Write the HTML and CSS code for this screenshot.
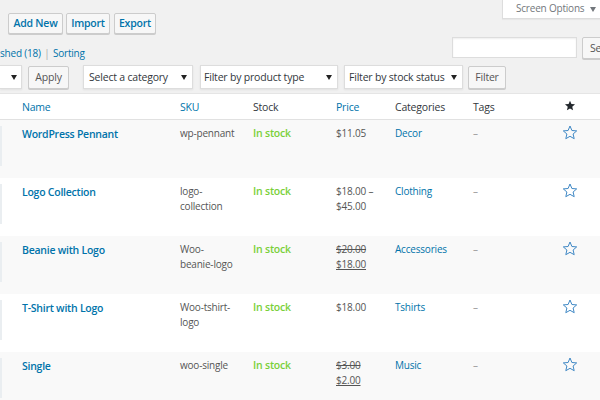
FILE: index.html
```html
<!DOCTYPE html>
<html>
<head>
<meta charset="utf-8">
<link rel="stylesheet" href="styles.css">
</head>
<body>
<div class="top">
  <div class="actions">
    <a class="btn add">Add New</a>
    <a class="btn imp">Import</a>
    <a class="btn exp">Export</a>
  </div>
  <div class="screen-tab">Screen Options <span class="tri"></span></div>
</div>
<div class="row2">
  <div class="subsubsub"><a>shed <span class="count">(18)</span></a> <span class="sep">|</span> <a>Sorting</a></div>
  <div class="search">
    <input class="search-input" type="text">
    <button class="btn gray">Search Products</button>
  </div>
</div>
<div class="tablenav">
  <div class="select bulk"><span class="tri"></span></div>
  <button class="btn gray apply">Apply</button>
  <div class="select cat">Select a category<span class="tri"></span></div>
  <div class="select type">Filter by product type<span class="tri"></span></div>
  <div class="select stock">Filter by stock status<span class="tri"></span></div>
  <button class="btn gray filter">Filter</button>
</div>
<table class="products">
  <colgroup>
    <col class="c-thumb"><col class="c-name"><col class="c-sku"><col class="c-stock"><col class="c-price"><col class="c-cat"><col class="c-tags"><col class="c-feat">
  </colgroup>
  <thead>
    <tr>
      <th></th>
      <th class="sort">Name</th>
      <th class="sort">SKU</th>
      <th>Stock</th>
      <th class="sort">Price</th>
      <th>Categories</th>
      <th>Tags</th>
      <th class="feat"><svg class="star-h" viewBox="0 0 16 16" width="12" height="12"><polygon points="8,1 9.9,5.4 14.7,5.8 11,9 12.1,13.7 8,11.2 3.9,13.7 5,9 1.3,5.8 6.1,5.4" fill="#23282d"/></svg></th>
    </tr>
  </thead>
  <tbody>
    <tr class="alt">
      <td><div class="thumb"></div></td>
      <td><a class="title">WordPress Pennant</a></td>
      <td class="sku">wp-pennant</td>
      <td class="instock">In stock</td>
      <td class="price">$11.05</td>
      <td class="cat"><a>Decor</a></td>
      <td class="tags">–</td>
      <td class="feat"><svg class="star" viewBox="0 0 16 16" width="16" height="16"><polygon points="8,1 9.9,5.5 14.7,5.9 11.1,9 12.2,13.7 8,11.3 3.8,13.7 4.9,9 1.3,5.9 6.1,5.5" fill="none" stroke="#3f88c5" stroke-width="1" stroke-linejoin="round"/></svg></td>
    </tr>
    <tr>
      <td><div class="thumb"></div></td>
      <td><a class="title">Logo Collection</a></td>
      <td class="sku">logo-collection</td>
      <td class="instock">In stock</td>
      <td class="price">$18.00&nbsp;–<br>$45.00</td>
      <td class="cat"><a>Clothing</a></td>
      <td class="tags">–</td>
      <td class="feat"><svg class="star" viewBox="0 0 16 16" width="16" height="16"><polygon points="8,1 9.9,5.5 14.7,5.9 11.1,9 12.2,13.7 8,11.3 3.8,13.7 4.9,9 1.3,5.9 6.1,5.5" fill="none" stroke="#3f88c5" stroke-width="1" stroke-linejoin="round"/></svg></td>
    </tr>
    <tr class="alt">
      <td><div class="thumb"></div></td>
      <td><a class="title">Beanie with Logo</a></td>
      <td class="sku">Woo-beanie-logo</td>
      <td class="instock">In stock</td>
      <td class="price"><del>$20.00</del><br><ins>$18.00</ins></td>
      <td class="cat"><a>Accessories</a></td>
      <td class="tags">–</td>
      <td class="feat"><svg class="star" viewBox="0 0 16 16" width="16" height="16"><polygon points="8,1 9.9,5.5 14.7,5.9 11.1,9 12.2,13.7 8,11.3 3.8,13.7 4.9,9 1.3,5.9 6.1,5.5" fill="none" stroke="#3f88c5" stroke-width="1" stroke-linejoin="round"/></svg></td>
    </tr>
    <tr>
      <td><div class="thumb"></div></td>
      <td><a class="title">T-Shirt with Logo</a></td>
      <td class="sku">Woo-tshirt-logo</td>
      <td class="instock">In stock</td>
      <td class="price">$18.00</td>
      <td class="cat"><a>Tshirts</a></td>
      <td class="tags">–</td>
      <td class="feat"><svg class="star" viewBox="0 0 16 16" width="16" height="16"><polygon points="8,1 9.9,5.5 14.7,5.9 11.1,9 12.2,13.7 8,11.3 3.8,13.7 4.9,9 1.3,5.9 6.1,5.5" fill="none" stroke="#3f88c5" stroke-width="1" stroke-linejoin="round"/></svg></td>
    </tr>
    <tr class="alt">
      <td><div class="thumb"></div></td>
      <td><a class="title">Single</a></td>
      <td class="sku">woo-single</td>
      <td class="instock">In stock</td>
      <td class="price"><del>$3.00</del><br><ins>$2.00</ins></td>
      <td class="cat"><a>Music</a></td>
      <td class="tags">–</td>
      <td class="feat"><svg class="star" viewBox="0 0 16 16" width="16" height="16"><polygon points="8,1 9.9,5.5 14.7,5.9 11.1,9 12.2,13.7 8,11.3 3.8,13.7 4.9,9 1.3,5.9 6.1,5.5" fill="none" stroke="#3f88c5" stroke-width="1" stroke-linejoin="round"/></svg></td>
    </tr>
  </tbody>
</table>
</body>
</html>
```
FILE: styles.css
```css
html, body { margin: 0; padding: 0; overflow: hidden; }
body {
  width: 600px;
  height: 400px;
  background: #f1f1f1;
  font-family: "Open Sans", "Noto Sans", sans-serif;
  font-size: 10.5px;
  letter-spacing: -0.2px;
  color: #444;
}
a { color: #0073aa; text-decoration: none; }

.top { display: flex; justify-content: space-between; align-items: flex-start; height: 37px; }
.actions { display: flex; gap: 3px; margin: 13px 0 0 8px; }
.btn {
  display: inline-block;
  box-sizing: border-box;
  height: 21px;
  padding: 0 5px;
  border: 1px solid #ccc;
  border-radius: 2px;
  background: #f7f7f7;
  box-shadow: 0 1px 0 #ccc;
  color: #0073aa;
  font-family: inherit;
  font-size: 10.5px;
  letter-spacing: -0.2px;
  font-weight: 600;
  line-height: 19px;
  white-space: nowrap;
  text-align: center;
}
.btn.gray { color: #555; font-weight: 400; }
.add { width: 55px; padding: 0; }
.imp { width: 44px; padding: 0; }
.exp { width: 42px; padding: 0; margin-left: 1px; }

.screen-tab {
  box-sizing: border-box;
  width: 98px;
  height: 19px;
  padding-left: 13px;
  background: #fff;
  border: 1px solid #ddd;
  border-top: 0;
  border-right: 0;
  box-shadow: 0 1px 1px rgba(0,0,0,.04);
  color: #72777c;
  font-size: 10px;
  line-height: 17px;
  white-space: nowrap;
}
.tri {
  display: inline-block;
  width: 0; height: 0;
  border-left: 3px solid transparent;
  border-right: 3px solid transparent;
  border-top: 5px solid #333;
  vertical-align: middle;
  margin-left: 3px;
}
.screen-tab .tri { border-top-color: #72777c; }

.row2 { display: flex; justify-content: space-between; height: 28px; }
.subsubsub { margin-top: 8px; line-height: 16px; color: #666; font-size: 10px; }
.subsubsub .count { color: #0073aa; }
.sep { color: #aaa; margin: 0 1px; }
.search { display: flex; gap: 5px; width: 148px; flex-shrink: 0; }
.search-input {
  box-sizing: border-box;
  flex-shrink: 0;
  width: 125px;
  height: 21px;
  margin: 0;
  border: 1px solid #ddd;
  box-shadow: inset 0 1px 2px rgba(0,0,0,.07);
  background: #fff;
}
.search .btn { flex-shrink: 0; height: 22px; padding: 0 7px; }

.tablenav { display: flex; align-items: flex-start; height: 24px; }
.select {
  box-sizing: border-box;
  flex-shrink: 0;
  display: flex;
  align-items: center;
  justify-content: space-between;
  height: 24px;
  padding: 0 5px 0 5px;
  background: #fff;
  border: 1px solid #ddd;
  box-shadow: 0 1px 2px rgba(0,0,0,.07);
  color: #32373c;
  font-size: 10.5px;
  white-space: nowrap;
}
.select .tri { margin-left: 0; border-top-color: #222; }
.bulk { width: 22px; border-left: 0; padding-left: 0; justify-content: flex-end; padding-right: 4px; }
.apply { flex-shrink: 0; width: 41px; margin: 1px 0 0 6px; height: 23px; line-height: 21px; padding: 0; }
.cat { width: 110px; margin-left: 14px; }
.type { width: 138px; margin-left: 7px; padding-left: 3px; }
.stock { width: 119px; margin-left: 6px; padding-left: 4px; }
.filter { flex-shrink: 0; width: 38px; margin: 1px 0 0 5px; height: 23px; line-height: 21px; padding: 0; }

.products {
  margin-top: 4px;
  width: 600px;
  table-layout: fixed;
  border-collapse: collapse;
  border-top: 1px solid #e5e5e5;
  background: #fff;
}
.c-thumb { width: 12px; }
.c-name { width: 158px; }
.c-sku { width: 73px; }
.c-stock { width: 83px; }
.c-price { width: 59px; }
.c-cat { width: 78px; }
.c-tags { width: 77px; }
.c-feat { width: 60px; }

.products th {
  height: 25px;
  padding: 0 10px;
  text-align: left;
  font-weight: 400;
  font-size: 10.5px;
  color: #32373c;
  border-bottom: 1px solid #e1e1e1;
  vertical-align: middle;
}
.products th.sort { color: #0073aa; }
.products th.feat { text-align: center; padding: 0; }
.star-h { display: block; margin: 0 auto; position: relative; top: -1px; }

.products td {
  height: 58px;
  box-sizing: border-box;
  padding: 6px 10px 0;
  vertical-align: top;
  font-size: 10px;
  line-height: 15px;
  color: #555;
}
.products tr.alt td { background: #f9f9f9; }
.products td:first-child { padding: 0; overflow: hidden; }
.thumb { width: 40px; height: 40px; margin: 6px 0 0 -38px; background: #eaeef1; }
.title { font-weight: 600; font-size: 10.5px; letter-spacing: -0.25px; line-height: 16px; }
.products td.sku { padding-right: 8px; }
.products td.price { padding-right: 2px; }
.products td.instock { color: #7ad03a; font-weight: 600; font-size: 10.5px; }
.price del, .price ins { color: #555; }
.price ins { text-decoration: underline; }
.products td.tags { color: #999; }
.products td.feat { padding: 5px 0 0; text-align: center; }
.star { display: block; margin: 0 auto; }
```
